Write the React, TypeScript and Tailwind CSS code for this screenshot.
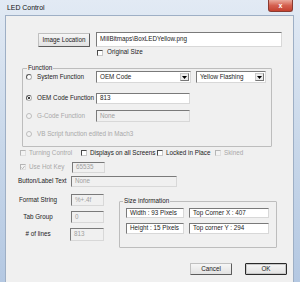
import React from "react";

const FONT = "[font-family:'Liberation_Sans',Arial,sans-serif]";

function Box({
  cls,
  children,
  disabled,
}: {
  cls: string;
  children?: React.ReactNode;
  disabled?: boolean;
}) {
  return (
    <div
      className={`flex items-center shrink-0 overflow-hidden whitespace-nowrap border border-t-[#7a7a7a] border-l-[#7a7a7a] border-r-[#d8d8d8] border-b-[#d8d8d8] pl-[3px] ${
        disabled ? "bg-[#f0f0f0] text-[#a0a0a0]" : "bg-white text-[#222]"
      } ${cls}`}
    >
      {children}
    </div>
  );
}

function Radio({ checked, disabled }: { checked?: boolean; disabled?: boolean }) {
  return (
    <span
      className={`flex items-center justify-center shrink-0 w-[6px] h-[6px] rounded-full border ${
        disabled
          ? "border-[#bdbdbd] bg-[#f3f3f3]"
          : "border-t-[#5a5a5a] border-l-[#5a5a5a] border-r-[#b0b0b0] border-b-[#b0b0b0] bg-white"
      }`}
    >
      {checked && <span className="w-[2px] h-[2px] rounded-full bg-black" />}
    </span>
  );
}

function Check({ checked, disabled }: { checked?: boolean; disabled?: boolean }) {
  return (
    <span
      className={`flex items-center justify-center shrink-0 w-[6px] h-[6px] border ${
        disabled
          ? "border-t-[#b5b5b5] border-l-[#b5b5b5] border-r-[#e0e0e0] border-b-[#e0e0e0] bg-[#f3f3f3]"
          : "border-t-[#4a4a4a] border-l-[#4a4a4a] border-r-[#c8c8c8] border-b-[#c8c8c8] bg-white"
      }`}
    >
      {checked && (
        <svg width="5" height="5" viewBox="0 0 5 5">
          <path d="M0.5 2.5 L2 4 L4.5 0.8" fill="none" stroke="#a0a0a0" strokeWidth="0.9" />
        </svg>
      )}
    </span>
  );
}

function Dropdown({ cls, text }: { cls: string; text: string }) {
  return (
    <div
      className={`flex items-stretch shrink-0 border border-t-[#7a7a7a] border-l-[#7a7a7a] border-r-[#d8d8d8] border-b-[#d8d8d8] bg-white ${cls}`}
    >
      <div className="flex-1 flex items-center pl-[3px] whitespace-nowrap overflow-hidden">{text}</div>
      <div className="w-[9px] my-[1px] mr-[1px] flex items-center justify-center bg-[#ececec] border border-[#c9c9c9] border-r-[#777] border-b-[#777]">
        <svg width="5" height="3" viewBox="0 0 5 3">
          <path d="M0 0 L5 0 L2.5 3 Z" fill="#000" />
        </svg>
      </div>
    </div>
  );
}

function Btn({ cls, children, def }: { cls: string; children: React.ReactNode; def?: boolean }) {
  return (
    <div
      className={`flex items-center justify-center shrink-0 rounded-[1px] bg-gradient-to-b from-[#f6f6f6] to-[#e2e2e2] ${
        def
          ? "border border-[#2a2a2a] shadow-[inset_0_0_0_1px_#c8c8c8]"
          : "border border-[#c0c0c0] border-r-[#5c5c5c] border-b-[#5c5c5c]"
      } ${cls}`}
    >
      {children}
    </div>
  );
}

export default function App() {
  return (
    <div
      className={`w-[300px] h-[282px] overflow-hidden flex flex-col bg-gradient-to-b from-[#e2eaf4] via-[#c9d8ea] to-[#b4c8e2] text-[6.3px] leading-none text-[#222] ${FONT}`}
    >
      {/* Title bar */}
      <div className="h-[15px] shrink-0 flex items-start">
        <div className="pl-[7px] pt-[5px] text-[6.9px] text-[#111]">LED Control</div>
        <div className="ml-auto mr-[7px] w-[25px] h-[12px] rounded-b-[3px] border border-t-0 border-[#8a3a30] bg-gradient-to-b from-[#e9a99c] via-[#d4604f] to-[#c5412f] flex items-center justify-center text-white font-bold text-[7px]">
          x
        </div>
      </div>

      <div className="flex flex-1">
        <div className="w-[5px] shrink-0" />
        {/* Client area */}
        <div className="w-[289px] shrink-0 bg-[#f0f0f0] border-t border-l border-r border-[#9eafc5] flex flex-col">
          {/* Image location row */}
          <div className="flex items-start mt-[16px]">
            <Btn cls="ml-[32px] mt-[1px] w-[52px] h-[14px]">Image Location</Btn>
            <Box cls="ml-[6px] w-[186px] h-[15px]">MillBitmaps\BoxLEDYellow.png</Box>
          </div>
          <div className="flex items-center mt-[2px] ml-[91px] h-[7px] gap-[4px]">
            <Check />
            <span>Original Size</span>
          </div>

          {/* Function group */}
          <div className="relative mt-[12px] ml-[16px] w-[250px] h-[79px] border border-[#bdbdbd] rounded-[1px] flex flex-col">
            <span className="absolute left-[4px] -top-[4px] px-[1px] bg-[#f0f0f0]">Function</span>
            <div className="flex items-center h-[12px] mt-[2px]">
              <div className="w-[73px] flex items-center">
                <span className="ml-[3px]">
                  <Radio />
                </span>
                <span className="ml-[5px]">System Function</span>
              </div>
              <Dropdown cls="w-[95px] h-[12px]" text="OEM Code" />
              <Dropdown cls="ml-[5px] w-[70px] h-[12px]" text="Yellow Flashing" />
            </div>
            <div className="flex items-center h-[11px] mt-[10px]">
              <div className="w-[73px] flex items-center">
                <span className="ml-[3px]">
                  <Radio checked />
                </span>
                <span className="ml-[5px]">OEM Code Function</span>
              </div>
              <Box cls="w-[94px] h-[11px]">813</Box>
            </div>
            <div className="flex items-center h-[12px] mt-[6px]">
              <div className="w-[73px] flex items-center text-[#a8a8a8]">
                <span className="ml-[3px]">
                  <Radio disabled />
                </span>
                <span className="ml-[5px]">G-Code Function</span>
              </div>
              <Box disabled cls="w-[94px] h-[12px]">
                None
              </Box>
            </div>
            <div className="flex items-center h-[12px] mt-[6px] text-[#a8a8a8]">
              <span className="ml-[3px]">
                <Radio disabled />
              </span>
              <span className="ml-[5px]">VB Script function edited in Mach3</span>
            </div>
          </div>

          {/* Checkbox row */}
          <div className="flex items-center h-[8px] mt-[2px] ml-[14px] whitespace-nowrap">
            <div className="w-[61px] flex items-center gap-[3px] text-[#a8a8a8]">
              <Check disabled />
              <span>Turning Control</span>
            </div>
            <div className="w-[76px] flex items-center gap-[3px]">
              <Check />
              <span>Displays on all Screens</span>
            </div>
            <div className="w-[58px] flex items-center gap-[3px]">
              <Check />
              <span>Locked in Place</span>
            </div>
            <div className="flex items-center gap-[3px] text-[#a8a8a8]">
              <Check disabled />
              <span>Skined</span>
            </div>
          </div>

          {/* Hot key */}
          <div className="flex items-center h-[11px] mt-[5px] ml-[14px]">
            <div className="w-[52px] flex items-center gap-[3px] text-[#a8a8a8]">
              <Check checked disabled />
              <span>Use Hot Key</span>
            </div>
            <Box disabled cls="w-[33px] h-[11px]">
              65535
            </Box>
          </div>

          {/* Button/Label text */}
          <div className="flex items-center h-[11px] mt-[3px]">
            <span className="ml-[12px] w-[53px] whitespace-nowrap">Button/Label Text</span>
            <Box disabled cls="w-[106px] h-[11px]">
              None
            </Box>
          </div>

          {/* Bottom section */}
          <div className="flex mt-[7px]">
            <div className="w-[113px] shrink-0 flex flex-col">
              <div className="flex items-center h-[12px]">
                <span className="ml-[9px] w-[46px] text-center whitespace-nowrap">Format String</span>
                <Box disabled cls="ml-[10px] w-[33px] h-[12px]">
                  %+.4f
                </Box>
              </div>
              <div className="flex items-center h-[12px] mt-[5px]">
                <span className="ml-[9px] w-[46px] text-center whitespace-nowrap">Tab Group</span>
                <Box disabled cls="ml-[10px] w-[33px] h-[12px]">
                  0
                </Box>
              </div>
              <div className="flex items-center h-[13px] mt-[5px]">
                <span className="ml-[9px] w-[46px] text-center whitespace-nowrap">
                  # of lines
                </span>
                <Box disabled cls="ml-[9px] w-[34px] h-[13px]">
                  813
                </Box>
              </div>
            </div>

            <div className="flex flex-col">
              <div className="relative mt-[7px] w-[158px] h-[47px] border border-[#bdbdbd] rounded-[1px] flex flex-col">
                <span className="absolute left-[3px] -top-[4px] px-[1px] bg-[#f0f0f0]">
                  Size information
                </span>
                <div className="flex mt-[6px]">
                  <Box cls="ml-[6px] w-[58px] h-[10px]">Width : 93 Pixels</Box>
                  <Box cls="ml-[5px] w-[80px] h-[10px]">Top Corner X : 407</Box>
                </div>
                <div className="flex mt-[5px]">
                  <Box cls="ml-[6px] w-[58px] h-[11px]">Height : 15 Pixels</Box>
                  <Box cls="ml-[5px] w-[80px] h-[11px]">Top corner Y : 294</Box>
                </div>
              </div>
              <div className="flex mt-[15px]">
                <Btn cls="ml-[71px] w-[42px] h-[12px]">Cancel</Btn>
                <Btn def cls="ml-[13px] w-[42px] h-[12px]">
                  OK
                </Btn>
              </div>
            </div>
          </div>
        </div>
        <div className="w-[6px] shrink-0" />
      </div>
    </div>
  );
}
